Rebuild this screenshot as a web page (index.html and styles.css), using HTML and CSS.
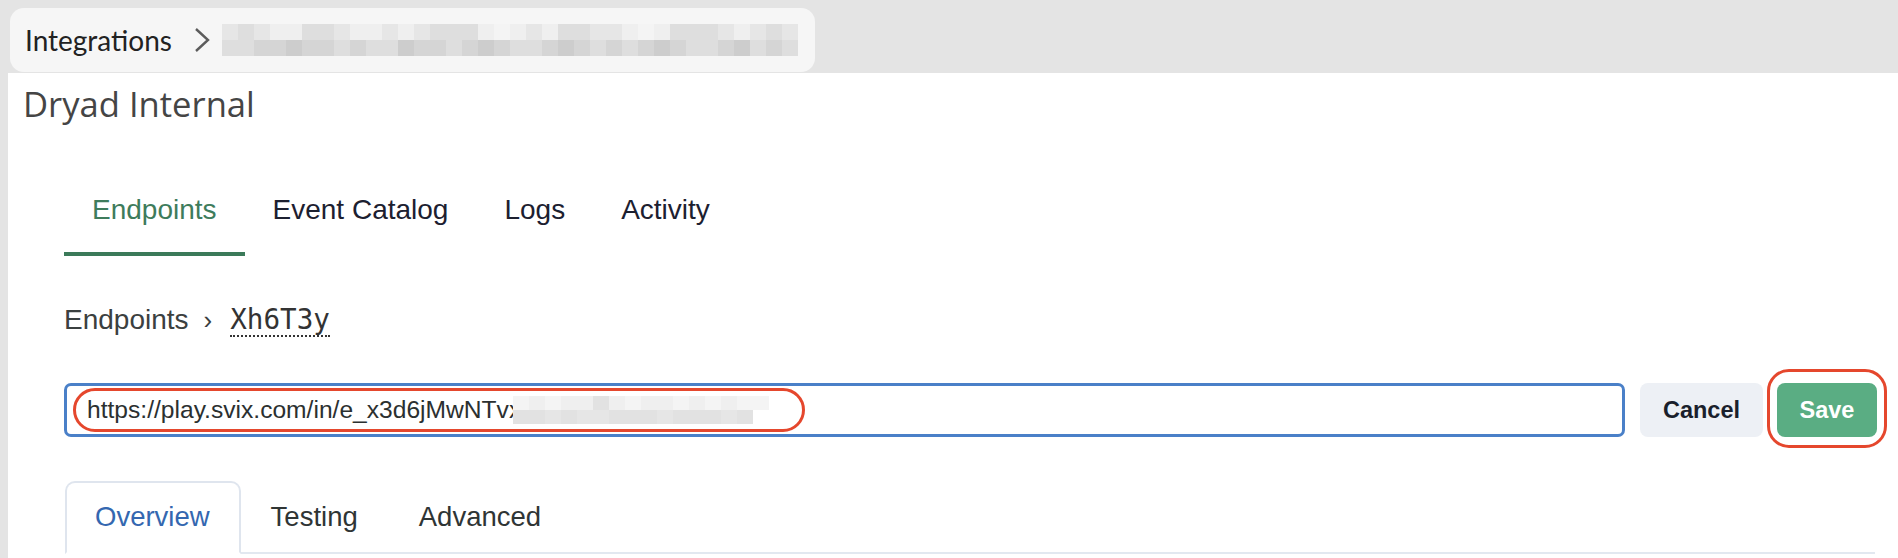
FILE: index.html
```html
<!DOCTYPE html>
<html lang="en">
<head>
<meta charset="utf-8">
<title>Dryad Internal – Endpoint</title>
<link rel="stylesheet" href="styles.css">
</head>
<body>
<header class="topbar">
  <nav class="crumbs">
    <span class="crumb-text">Integrations</span>
    <svg class="crumb-chev" width="18" height="26" viewBox="0 0 18 26" aria-hidden="true"><polyline points="3,2 15,13 3,24" fill="none" stroke="#5c5c5c" stroke-width="2.4" stroke-linejoin="miter"/></svg>
    <span class="pix pix-crumb" aria-hidden="true">
      <span class="b"></span><span class="c"></span><span class="b"></span><span class="a"></span><span class="a"></span><span class="c"></span><span class="c"></span><span class="b"></span><span class="a"></span><span class="a"></span><span class="b"></span><span class="a"></span><span class="b"></span><span class="c"></span><span class="c"></span><span class="c"></span><span class="a"></span><span class="f"></span><span class="a"></span><span class="b"></span><span class="a"></span><span class="c"></span><span class="c"></span><span class="b"></span><span class="b"></span><span class="a"></span><span class="f"></span><span class="a"></span><span class="c"></span><span class="c"></span><span class="c"></span><span class="b"></span><span class="a"></span><span class="b"></span><span class="c"></span><span class="b"></span>
      <span class="c"></span><span class="c"></span><span class="d"></span><span class="d"></span><span class="e"></span><span class="d"></span><span class="d"></span><span class="c"></span><span class="d"></span><span class="c"></span><span class="c"></span><span class="e"></span><span class="d"></span><span class="d"></span><span class="c"></span><span class="d"></span><span class="e"></span><span class="d"></span><span class="c"></span><span class="c"></span><span class="d"></span><span class="e"></span><span class="d"></span><span class="c"></span><span class="d"></span><span class="c"></span><span class="d"></span><span class="e"></span><span class="d"></span><span class="c"></span><span class="c"></span><span class="d"></span><span class="e"></span><span class="c"></span><span class="d"></span><span class="c"></span>
    </span>
  </nav>
</header>

<main class="page">
  <h1 class="title">Dryad Internal</h1>

  <nav class="tabs">
    <a class="tab is-active">Endpoints</a>
    <a class="tab">Event Catalog</a>
    <a class="tab">Logs</a>
    <a class="tab">Activity</a>
  </nav>

  <div class="path">
    <span class="path-link">Endpoints</span>
    <span class="path-sep">›</span>
    <span class="path-id">Xh6T3y</span>
  </div>

  <div class="url-row">
    <div class="url-field">
      <span class="url-text">https://play.svix.com/in/e_x3d6jMwNTvx</span><span class="pix pix-url" aria-hidden="true">
        <span class="f"></span><span class="a"></span><span class="f"></span><span class="a"></span><span class="a"></span><span class="g"></span><span class="a"></span><span class="f"></span><span class="a"></span><span class="a"></span><span class="f"></span><span class="a"></span><span class="f"></span><span class="a"></span><span class="f"></span><span class="f"></span>
        <span class="g"></span><span class="g"></span><span class="b"></span><span class="g"></span><span class="b"></span><span class="b"></span><span class="g"></span><span class="g"></span><span class="g"></span><span class="b"></span><span class="g"></span><span class="g"></span><span class="g"></span><span class="b"></span><span class="g"></span><span class="w"></span>
      </span>
      <span class="mark-oval" aria-hidden="true"></span>
    </div>
    <button class="btn btn-cancel">Cancel</button>
    <span class="save-wrap">
      <button class="btn btn-save">Save</button>
      <span class="mark-ring" aria-hidden="true"></span>
    </span>
  </div>

  <div class="subtabs">
    <div class="subtab is-active">Overview</div>
    <div class="subtab">Testing</div>
    <div class="subtab">Advanced</div>
  </div>
</main>
</body>
</html>
```

FILE: styles.css
```css
* { box-sizing: border-box; }

html, body {
  margin: 0;
  padding: 0;
}

body {
  background: #e4e4e4;
  font-family: "Liberation Sans", Arial, sans-serif;
  overflow: hidden;
}

/* ---------- top bar ---------- */
.topbar {
  height: 73px;
  padding: 8px 0 0 10px;
}

.crumbs {
  width: 805px;
  height: 64px;
  background: #f6f6f6;
  border-radius: 14px;
  display: flex;
  align-items: center;
  padding: 0 15px;
}

.crumb-text {
  font-family: Lato, "Open Sans", sans-serif;
  font-size: 28px;
  color: #222;
  line-height: 32px;
}

.crumb-chev {
  margin-left: 21px;
  margin-right: 11px;
  flex: none;
}

.pix {
  display: grid;
  flex: none;
}

.pix-crumb {
  grid-template-columns: repeat(36, 16px);
  grid-template-rows: 16px 16px;
}

.pix .a { background: #efefef; }
.pix .b { background: #e6e6e6; }
.pix .c { background: #dedede; }
.pix .d { background: #d5d5d5; }
.pix .e { background: #cdcdcd; }
.pix .f { background: #f4f4f4; }
.pix .g { background: #e2e2e2; }
.pix .w { background: #ffffff; }

/* ---------- page ---------- */
.page {
  margin-left: 8px;
  background: #fff;
  height: calc(100vh - 73px);
}

.title {
  margin: 0;
  padding: 8px 0 0 15px;
  font-family: "Open Sans", sans-serif;
  font-weight: 400;
  font-size: 34.6px;
  line-height: 46px;
  color: #454545;
}

/* main tabs */
.tabs {
  display: flex;
  margin: 67px 0 0 56px;
}

.tab {
  font-size: 28px;
  line-height: 32px;
  padding: 0 28px 26px;
  border-bottom: 4px solid transparent;
  color: #1c2030;
}

.tab.is-active {
  color: #3e7c5c;
  border-bottom-color: #3b7a59;
}

/* breadcrumb path */
.path {
  display: flex;
  align-items: baseline;
  margin: 48px 0 0 56px;
  font-size: 28px;
  line-height: 32px;
  color: #3b4040;
  height: 32px;
}

.path-sep {
  margin: 0 18px 0 15px;
  font-size: 26px;
}

.path-id {
  font-family: "DejaVu Sans Mono", monospace;
  font-size: 27.6px;
  color: #333;
  border-bottom: 2px dotted #333;
  line-height: 30px;
}

/* url row */
.url-row {
  display: flex;
  align-items: stretch;
  gap: 14px;
  height: 54px;
  margin: 47px 21px 0 56px;
}

.url-field {
  position: relative;
  flex: 1;
  display: flex;
  align-items: center;
  border: 3px solid #4a80c8;
  border-radius: 7px;
  padding-left: 20px;
  margin-right: 1px;
}

.url-text {
  font-size: 24.6px;
  color: #2b3030;
  white-space: nowrap;
}

.pix-url {
  grid-template-columns: repeat(16, 16px);
  grid-template-rows: 14px 14px;
  margin-left: -8px;
}

.mark-oval {
  position: absolute;
  left: 6px;
  top: 2px;
  width: 732px;
  height: 44px;
  border: 3px solid #e5472d;
  border-radius: 999px;
}

.btn {
  border: none;
  border-radius: 8px;
  font-family: "Liberation Sans", Arial, sans-serif;
  font-weight: 700;
  font-size: 23.5px;
  cursor: pointer;
}

.btn-cancel {
  width: 123px;
  background: #edf0f5;
  color: #1a1f2c;
}

.save-wrap {
  position: relative;
  display: flex;
}

.btn-save {
  width: 100px;
  background: #5aad83;
  color: #fff;
}

.mark-ring {
  position: absolute;
  left: -10px;
  top: -14px;
  width: 120px;
  height: 79px;
  border: 3px solid #e5472d;
  border-radius: 22px;
}

/* sub tabs */
.subtabs {
  display: flex;
  margin: 44px 23px 0 57px;
  border-bottom: 2px solid #e2e8f0;
}

.subtab {
  font-size: 27.5px;
  line-height: 32px;
  padding: 18px 29px 19px 28px;
  border: 2px solid transparent;
  border-radius: 10px 10px 0 0;
  margin-bottom: -2px;
  color: #2f3535;
}

.subtab.is-active {
  color: #3467b0;
  border-color: #dfe5ee #dfe5ee #fff;
  background: #fff;
}
```
